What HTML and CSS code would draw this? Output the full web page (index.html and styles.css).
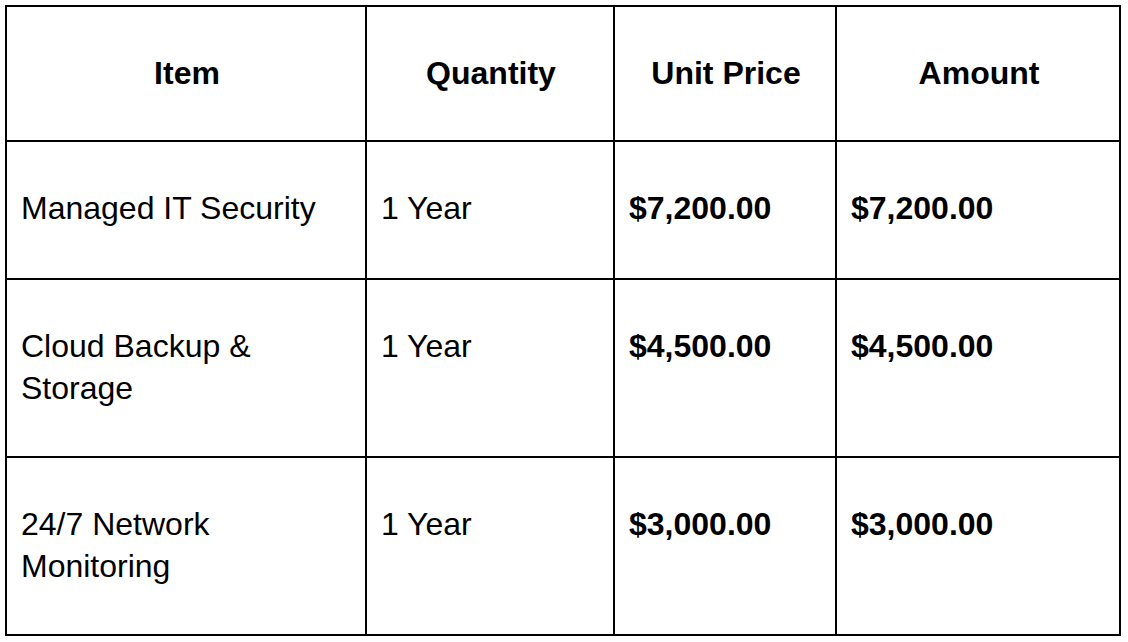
FILE: index.html
```html
<!DOCTYPE html>
<html lang="en">
<head>
<meta charset="utf-8">
<title>Invoice items</title>
<link rel="stylesheet" href="styles.css">
</head>
<body>
<table class="items">
  <colgroup>
    <col class="c1"><col class="c2"><col class="c3"><col class="c4">
  </colgroup>
  <thead>
    <tr class="head">
      <th>Item</th><th>Quantity</th><th>Unit Price</th><th>Amount</th>
    </tr>
  </thead>
  <tbody>
    <tr class="r1">
      <td>Managed IT Security</td><td>1 Year</td><td class="money">$7,200.00</td><td class="money">$7,200.00</td>
    </tr>
    <tr>
      <td>Cloud Backup &amp;<br>Storage</td><td>1 Year</td><td class="money">$4,500.00</td><td class="money">$4,500.00</td>
    </tr>
    <tr>
      <td>24/7 Network<br>Monitoring</td><td>1 Year</td><td class="money">$3,000.00</td><td class="money">$3,000.00</td>
    </tr>
  </tbody>
</table>
</body>
</html>
```
FILE: styles.css
```css
html, body {
  margin: 0;
  padding: 0;
  background: #ffffff;
}
body {
  padding: 5px;
  font-family: "Liberation Sans", Arial, sans-serif;
  color: #000000;
}
.items {
  border-collapse: separate;
  border-spacing: 0;
  table-layout: fixed;
  width: 1116px;
  border-left: 2px solid #000;
  border-top: 2px solid #000;
}
.c1 { width: 360px; }
.c2 { width: 248px; }
.c3 { width: 222px; }
.c4 { width: 284px; }
.items th,
.items td {
  border-right: 2px solid #000;
  border-bottom: 2px solid #000;
  font-size: 32px;
  line-height: 42px;
  padding: 45px 12px 47px 14px;
  vertical-align: top;
  text-align: left;
}
.items th {
  font-weight: bold;
  text-align: center;
  padding-bottom: 46px;
}
.items .r1 td {
  padding-bottom: 49px;
}
.items .money {
  font-weight: bold;
}
```
